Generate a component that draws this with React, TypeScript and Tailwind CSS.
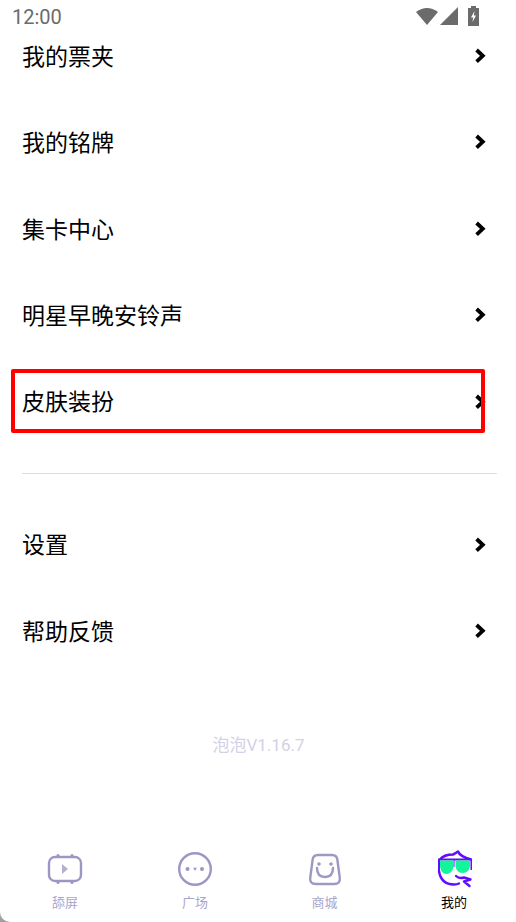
const menuTop = ["我的票夹", "我的铭牌", "集卡中心", "明星早晚安铃声", "皮肤装扮"];
const menuBottom = ["设置", "帮助反馈"];

function Chevron() {
  return (
    <svg width="14" height="16" viewBox="0 0 14 16" fill="none">
      <path d="M2.6 2 L8.8 7.8 L2.6 13.6" stroke="#000" strokeWidth="3.8" />
    </svg>
  );
}

function Row({ label }: { label: string }) {
  return (
    <div className="flex h-[48px] items-center justify-between pl-[22px] pr-[28px] text-[23px] text-black">
      <span className="pb-[2px]">{label}</span>
      <Chevron />
    </div>
  );
}

function TabIcon({ name }: { name: string }) {
  if (name === "tv") {
    return (
      <svg width="36" height="34" viewBox="0 0 36 34" fill="none" stroke="#9b97c4" strokeWidth="2.4">
        <rect x="2" y="5" width="32" height="24" rx="6" />
        <circle cx="11" cy="3.5" r="1.5" fill="#9b97c4" stroke="none" />
        <circle cx="25" cy="3.5" r="1.5" fill="#9b97c4" stroke="none" />
        <circle cx="11" cy="30.5" r="1.5" fill="#9b97c4" stroke="none" />
        <circle cx="25" cy="30.5" r="1.5" fill="#9b97c4" stroke="none" />
        <path d="M15 12 L21 17 L15 22 Z" fill="#b3b0d2" stroke="none" />
      </svg>
    );
  }
  if (name === "chat") {
    return (
      <svg width="36" height="36" viewBox="0 0 36 36" fill="none">
        <circle cx="18" cy="18" r="15.8" stroke="#9b97c4" strokeWidth="2.4" />
        <circle cx="10.5" cy="18" r="2" fill="#9b97c4" />
        <path d="M16.2 16.8 H19.8 L18 20 Z" fill="#9b97c4" />
        <circle cx="25" cy="18" r="2" fill="#9b97c4" />
      </svg>
    );
  }
  if (name === "bag") {
    return (
      <svg width="34" height="33" viewBox="0 0 34 33" fill="none" stroke="#9d9ac2" strokeWidth="2.4">
        <path d="M10 2 H24 Q29 2 29.4 7 L31.8 25 Q32.5 31 26 31 H8 Q1.5 31 2.2 25 L4.6 7 Q5 2 10 2 Z" />
        <circle cx="11" cy="11" r="1.8" fill="#9d9ac2" stroke="none" />
        <circle cx="23" cy="11" r="1.8" fill="#9d9ac2" stroke="none" />
        <path d="M9 15 Q9 24 17 24 Q25 24 25 15" strokeLinecap="round" />
      </svg>
    );
  }
  return (
    <svg width="38" height="38" viewBox="0 0 38 38" fill="none">
      {/* hair */}
      <path d="M5 9.5 Q9 4.5 18 4.5 Q21 3 23 1.5 Q25 6.5 36 9.5" stroke="#5f0cff" strokeWidth="2.6" strokeLinejoin="round" />
      {/* glasses frame */}
      <path d="M3 8.5 H37 V20 H35.5 V10.5 H19.5 V17 H18.5 V10.5 H5 V22 H3 Z" fill="#5f0cff" />
      {/* lenses */}
      <path d="M5 10.5 H18.5 V15 C18.5 20.5 15.5 24 11.5 24 C7.5 24 5 20.5 5 15 Z" fill="#12f59a" />
      <path d="M20.5 10.5 H35 V15 C35 20 32 23 27.5 23 C23.5 23 20.5 20 20.5 15 Z" fill="#12f59a" />
      {/* face */}
      <path d="M4 21 Q6 34.5 19 34.5 Q22 34.5 24 33.5" stroke="#5f0cff" strokeWidth="2.4" strokeLinecap="round" />
      {/* hand */}
      <path d="M21 26 Q24 29 29 27.5 L35.5 29.5 L29 31.5 L34.5 36" stroke="#5f0cff" strokeWidth="2.4" strokeLinecap="round" strokeLinejoin="round" />
    </svg>
  );
}

const tabs = [
  { icon: "tv", label: "舔屏" },
  { icon: "chat", label: "广场" },
  { icon: "bag", label: "商城" },
  { icon: "me", label: "我的", active: true },
];

export default function App() {
  return (
    <div className="h-[922px] w-[516px] overflow-hidden bg-[#a0a0a0]">
      <div
        className="relative flex h-[922px] w-[516px] flex-col overflow-hidden rounded-bl-[10px] bg-white"
        style={{ fontFamily: '"Noto Sans CJK SC", Roboto, sans-serif' }}
      >
        {/* Status bar */}
        <div className="flex h-[32px] items-center justify-between pl-[12px] pr-[37px]">
          <span className="pt-[2px] text-[20px] text-[#6b6b6b]" style={{ fontFamily: "Roboto, sans-serif" }}>12:00</span>
          <div className="flex items-center gap-[2px]">
            <svg width="22" height="18" viewBox="0 0 22 18" fill="#6b6b6b">
              <path d="M0 5 Q11 -3 22 5 L11 18 Z" />
            </svg>
            <svg width="18" height="18" viewBox="0 0 18 18" fill="#6b6b6b" className="mr-[8px]">
              <path d="M18 0 V18 H0 Z" />
            </svg>
            <svg width="11" height="20" viewBox="0 0 11 20" fill="#6b6b6b">
              <path d="M3 0 H8 V2 H11 V20 H0 V2 H3 Z" />
              <path d="M6.5 5 L3 11.5 H5.2 L4.5 16 L8 9.5 H5.8 Z" fill="#fff" />
            </svg>
          </div>
        </div>

        {/* Menu */}
        <div className="flex flex-col gap-[38.4px]">
          {menuTop.map((label) => (
            <Row key={label} label={label} />
          ))}
        </div>
        <div className="mb-[47px] ml-[22px] mr-[19px] mt-[47px] h-px bg-[#dddde6]" />
        <div className="flex flex-col gap-[38.4px]">
          {menuBottom.map((label) => (
            <Row key={label} label={label} />
          ))}
        </div>
        <div
          className="ml-px mt-[78px] text-center text-[17px] leading-[24px] text-[#d3d1e6]"
          style={{ fontFamily: 'Roboto, "Noto Sans CJK SC", sans-serif' }}
        >
          泡泡V1.16.7
        </div>

        {/* Tab bar */}
        <div className="mt-auto grid h-[83px] w-[519px] grid-cols-[130px_130px_129px_130px]">
          {tabs.map((tab) => (
            <div key={tab.label} className="flex flex-col items-center pt-[6px]">
              <div className="flex h-[48px] items-center justify-center">
                <TabIcon name={tab.icon} />
              </div>
              <span className={`text-[13px] leading-[18px] ${tab.active ? "text-black" : "text-[#a9a6cc]"}`}>{tab.label}</span>
            </div>
          ))}
        </div>

        {/* Highlight box */}
        <div className="pointer-events-none absolute left-[11px] top-[369px] h-[64px] w-[474px] rounded-[2px] border-[4px] border-[#ff0000]" />
      </div>
    </div>
  );
}
